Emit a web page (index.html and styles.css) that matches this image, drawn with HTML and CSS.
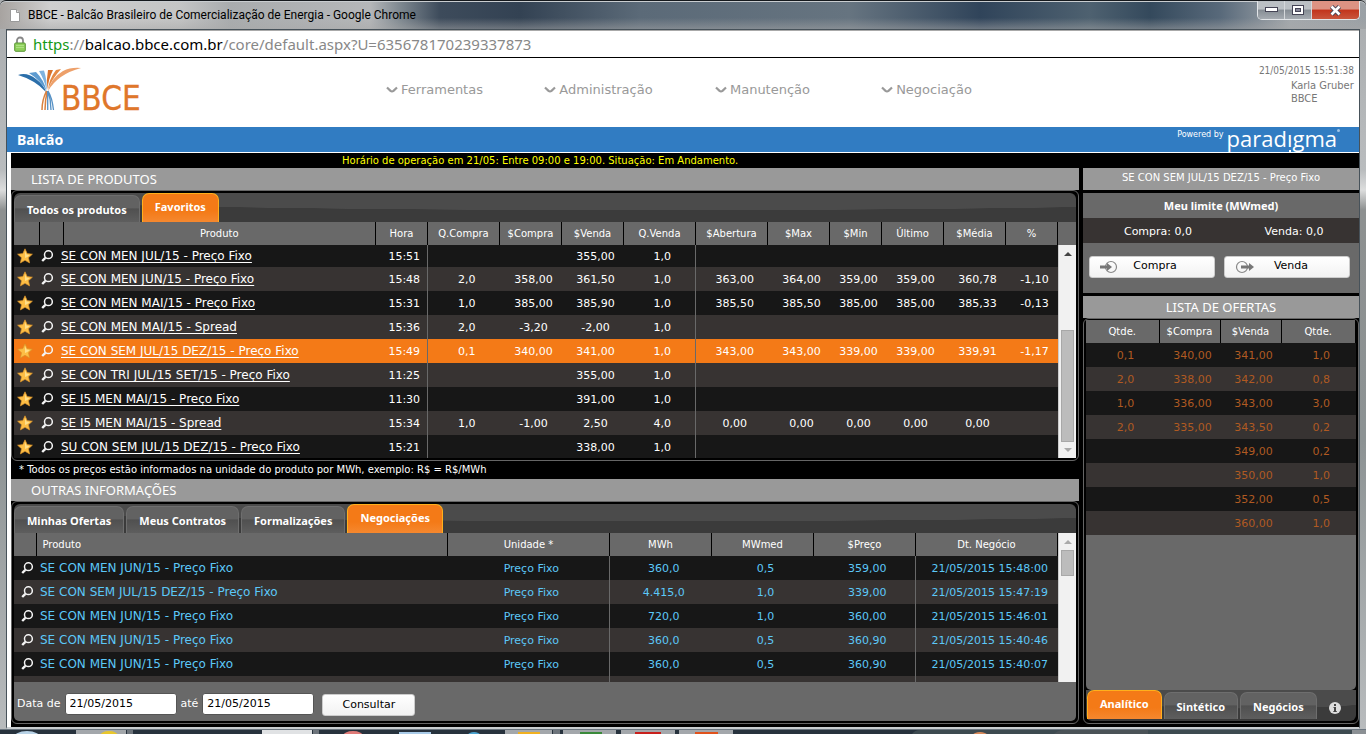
FILE: index.html
```html
<!DOCTYPE html>
<html lang="pt-BR">
<head>
<meta charset="utf-8">
<title>BBCE - Balcão Brasileiro de Comercialização de Energia</title>
<link rel="stylesheet" href="styles.css">
</head>
<body>
<svg class="defs" aria-hidden="true">
  <symbol id="star" viewBox="0 0 16 16"><path d="M8 .8l2.200 4.800 5.200.6-3.900 3.500 1.100 5.200L8 12.300l-4.600 2.600 1.100-5.200L.6 6.200l5.200-.6z" fill="#fdbe45" stroke="#d9902a" stroke-width=".7"/><path d="M8 3l1.500 3.500 3.400.4-2.600 2.200L8 10z" fill="#ffdf8a"/></symbol>
  <symbol id="lens" viewBox="0 0 12 12"><circle cx="7.400" cy="4.700" r="3.900" fill="none" stroke="#f4f4f4" stroke-width="1.500"/><path d="M4.400 7.800L1.200 11" stroke="#f4f4f4" stroke-width="2.400"/></symbol>
  <symbol id="chev" viewBox="0 0 12 8"><path d="M1 1.500L4.500 4.800Q6 5.900 7.500 4.800L11 1.500" fill="none" stroke="#999" stroke-width="2.200"/></symbol>
  <symbol id="up" viewBox="0 0 8 4"><path d="M0 4L4 0l4 4z" fill="currentColor"/></symbol>
  <symbol id="down" viewBox="0 0 8 4"><path d="M0 0l4 4 4-4z" fill="currentColor"/></symbol>
</svg>
<div class="window">
  <div class="titlebar">
    <svg class="page-icon" viewBox="0 0 10 13"><path d="M.5.5h6l3 3v9h-9z" fill="#fff" stroke="#999"/><path d="M6.500.5v3h3" fill="#ddd" stroke="#999"/></svg>
    <span class="caption">BBCE - Balcão Brasileiro de Comercialização de Energia - Google Chrome</span>
    <div class="win-buttons">
      <button class="win-btn" aria-label="Minimizar"><svg width="13" height="6"><rect x=".5" y=".5" width="12" height="4" fill="#fff" stroke="#445"/></svg></button>
      <button class="win-btn" aria-label="Maximizar"><svg width="12" height="10"><rect x=".5" y=".5" width="11" height="9" fill="#fff" stroke="#445"/><rect x="3.500" y="3.500" width="5" height="3" fill="#889" stroke="#445"/></svg></button>
      <button class="win-btn close" aria-label="Fechar"><svg width="13" height="11"><path d="M2.500 1.500l8 8M10.500 1.500l-8 8" stroke="#445" stroke-width="4.500"/><path d="M2.500 1.500l8 8M10.500 1.500l-8 8" stroke="#fff" stroke-width="2.600"/></svg></button>
    </div>
  </div>
  <div class="client">
    <div class="address">
      <svg class="lock" viewBox="0 0 12 16"><path d="M3 8V4.500a3 3 0 016 0V8" fill="none" stroke="#888" stroke-width="1.800"/><rect x=".7" y="7" width="10.600" height="8.300" rx="1" fill="#8fd05c" stroke="#5a9636"/><path d="M2 9.500h8M2 11.500h8" stroke="#b5e58c" stroke-width=".8"/></svg>
      <span><span class="scheme">https</span>://<span class="host">balcao.bbce.com.br</span>/core/default.aspx?U=635678170239337873</span>
    </div>
    <header class="header">
      <svg class="logo" viewBox="0 0 130 50" role="img" aria-label="BBCE">
        <path d="M0 8Q9 5 18 12q8 6 10 13Q17 13 0 8z" fill="#2c6faa"/>
        <path d="M11 6l7-1q8 8 10.500 19Q22 13 11 6z" fill="#5d9bd0"/><path d="M21 4l5-.5q3 9 2.800 20Q26 12 21 4z" fill="#7fb2dd"/>
        <path d="M30 3l5 0Q30 13 29.500 23 28 13 30 3z" fill="#d9722b"/><path d="M38 3l5-1Q33 13 30 23 31 12 38 3z" fill="#e58a45"/>
        <path d="M45 4Q53 0 63 1 40 7 30 24 33 11 45 4z" fill="#eda06a"/>
        <path d="M28.500 24Q24 33 24 43M29.300 24Q27 33 27 43" stroke="#d9813f" stroke-width="1.500" fill="none"/>
        <path d="M29.700 24v19M30 24q3 9 3 19M30 24q4 6 5.500 19" stroke="#5590c4" stroke-width="1.300" fill="none"/>
        <text x="43" y="43" class="logo-text">BBCE</text>
      </svg>
      <nav class="menu">
        <a href="#"><svg><use href="#chev"/></svg>Ferramentas</a>
        <a href="#"><svg><use href="#chev"/></svg>Administração</a>
        <a href="#"><svg><use href="#chev"/></svg>Manutenção</a>
        <a href="#"><svg><use href="#chev"/></svg>Negociação</a>
      </nav>
      <div class="user">
        <div class="clock">21/05/2015 15:51:38</div>
        <div class="who">Karla Gruber<br>BBCE</div>
      </div>
    </header>
    <div class="bluebar">
      <h1>Balcão</h1>
      <div class="powered"><span class="by">Powered by</span><span class="brand">parad<span class="brand-i">ı</span>gma</span><span class="reg"></span></div>
    </div>
    <main class="main">
      <div class="notice">Horário de operação em 21/05: Entre 09:00 e 19:00. Situação: Em Andamento.</div>
      <div class="columns">
        <div class="left">
          <h2 class="section">LISTA DE PRODUTOS</h2>
          <section class="panel">
            <div class="tabs"><button class="tab">Todos os produtos</button><button class="tab active">Favoritos</button></div>
            <div class="grid products">
              <table>
                <colgroup><col class="w26"><col class="w24"><col><col class="w52"><col class="w72"><col class="w62"><col class="w62"><col class="w72"><col class="w72"><col class="w62"><col class="w52"><col class="w62"><col class="w62"><col class="w52"></colgroup>
                <thead><tr><th></th><th></th><th>Produto</th><th>Hora</th><th>Q.Compra</th><th>$Compra</th><th>$Venda</th><th>Q.Venda</th><th>$Abertura</th><th>$Max</th><th>$Min</th><th>Último</th><th>$Média</th><th>%</th></tr></thead>
                <tbody>
                  <tr class="cut"><td><svg class="star"><use href="#star"/></svg></td><td><svg class="lens"><use href="#lens"/></svg></td><td><a href="#">SE CON MEN JUL/15 - Preço Fixo</a></td><td>15:51</td><td></td><td></td><td>355,00</td><td>1,0</td><td></td><td></td><td></td><td></td><td></td><td></td></tr>
                  <tr><td><svg class="star"><use href="#star"/></svg></td><td><svg class="lens"><use href="#lens"/></svg></td><td><a href="#">SE CON MEN JUN/15 - Preço Fixo</a></td><td>15:48</td><td>2,0</td><td>358,00</td><td>361,50</td><td>1,0</td><td>363,00</td><td>364,00</td><td>359,00</td><td>359,00</td><td>360,78</td><td>-1,10</td></tr>
                  <tr><td><svg class="star"><use href="#star"/></svg></td><td><svg class="lens"><use href="#lens"/></svg></td><td><a href="#">SE CON MEN MAI/15 - Preço Fixo</a></td><td>15:31</td><td>1,0</td><td>385,00</td><td>385,90</td><td>1,0</td><td>385,50</td><td>385,50</td><td>385,00</td><td>385,00</td><td>385,33</td><td>-0,13</td></tr>
                  <tr><td><svg class="star"><use href="#star"/></svg></td><td><svg class="lens"><use href="#lens"/></svg></td><td><a href="#">SE CON MEN MAI/15 - Spread</a></td><td>15:36</td><td>2,0</td><td>-3,20</td><td>-2,00</td><td>1,0</td><td></td><td></td><td></td><td></td><td></td><td></td></tr>
                  <tr class="selected"><td><svg class="star"><use href="#star"/></svg></td><td><svg class="lens"><use href="#lens"/></svg></td><td><a href="#">SE CON SEM JUL/15 DEZ/15 - Preço Fixo</a></td><td>15:49</td><td>0,1</td><td>340,00</td><td>341,00</td><td>1,0</td><td>343,00</td><td>343,00</td><td>339,00</td><td>339,00</td><td>339,91</td><td>-1,17</td></tr>
                  <tr><td><svg class="star"><use href="#star"/></svg></td><td><svg class="lens"><use href="#lens"/></svg></td><td><a href="#">SE CON TRI JUL/15 SET/15 - Preço Fixo</a></td><td>11:25</td><td></td><td></td><td>355,00</td><td>1,0</td><td></td><td></td><td></td><td></td><td></td><td></td></tr>
                  <tr><td><svg class="star"><use href="#star"/></svg></td><td><svg class="lens"><use href="#lens"/></svg></td><td><a href="#">SE I5 MEN MAI/15 - Preço Fixo</a></td><td>11:30</td><td></td><td></td><td>391,00</td><td>1,0</td><td></td><td></td><td></td><td></td><td></td><td></td></tr>
                  <tr><td><svg class="star"><use href="#star"/></svg></td><td><svg class="lens"><use href="#lens"/></svg></td><td><a href="#">SE I5 MEN MAI/15 - Spread</a></td><td>15:34</td><td>1,0</td><td>-1,00</td><td>2,50</td><td>4,0</td><td>0,00</td><td>0,00</td><td>0,00</td><td>0,00</td><td>0,00</td><td></td></tr>
                  <tr><td><svg class="star"><use href="#star"/></svg></td><td><svg class="lens"><use href="#lens"/></svg></td><td><a href="#">SU CON SEM JUL/15 DEZ/15 - Preço Fixo</a></td><td>15:21</td><td></td><td></td><td>338,00</td><td>1,0</td><td></td><td></td><td></td><td></td><td></td><td></td></tr>
                </tbody>
              </table>
              <div class="scroll"><svg class="arrow on"><use href="#up"/></svg><span class="track"><span class="thumb low"></span></span><svg class="arrow"><use href="#down"/></svg></div>
            </div>
          </section>
          <p class="note">* Todos os preços estão informados na unidade do produto por MWh, exemplo: R$ = R$/MWh</p>
          <h2 class="section">OUTRAS INFORMAÇÕES</h2>
          <section class="panel grow">
            <div class="tabs"><button class="tab">Minhas Ofertas</button><button class="tab">Meus Contratos</button><button class="tab">Formalizações</button><button class="tab active">Negociações</button></div>
            <div class="grid deals">
              <table>
                <colgroup><col class="w22"><col><col class="w162"><col class="w102"><col class="w102"><col class="w102"><col class="w142"></colgroup>
                <thead><tr><th></th><th class="start">Produto</th><th>Unidade *</th><th>MWh</th><th>MWmed</th><th>$Preço</th><th>Dt. Negócio</th></tr></thead>
                <tbody>
                  <tr><td><svg class="lens"><use href="#lens"/></svg></td><td>SE CON MEN JUN/15 - Preço Fixo</td><td>Preço Fixo</td><td>360,0</td><td>0,5</td><td>359,00</td><td>21/05/2015 15:48:00</td></tr>
                  <tr><td><svg class="lens"><use href="#lens"/></svg></td><td>SE CON SEM JUL/15 DEZ/15 - Preço Fixo</td><td>Preço Fixo</td><td>4.415,0</td><td>1,0</td><td>339,00</td><td>21/05/2015 15:47:19</td></tr>
                  <tr><td><svg class="lens"><use href="#lens"/></svg></td><td>SE CON MEN JUN/15 - Preço Fixo</td><td>Preço Fixo</td><td>720,0</td><td>1,0</td><td>360,00</td><td>21/05/2015 15:46:01</td></tr>
                  <tr><td><svg class="lens"><use href="#lens"/></svg></td><td>SE CON MEN JUN/15 - Preço Fixo</td><td>Preço Fixo</td><td>360,0</td><td>0,5</td><td>360,90</td><td>21/05/2015 15:40:46</td></tr>
                  <tr><td><svg class="lens"><use href="#lens"/></svg></td><td>SE CON MEN JUN/15 - Preço Fixo</td><td>Preço Fixo</td><td>360,0</td><td>0,5</td><td>360,90</td><td>21/05/2015 15:40:07</td></tr>
                  <tr><td><svg class="lens"><use href="#lens"/></svg></td><td></td><td></td><td></td><td></td><td></td><td></td></tr>
                </tbody>
              </table>
              <div class="scroll"><svg class="arrow"><use href="#up"/></svg><span class="track"><span class="thumb high"></span></span><svg class="arrow on"><use href="#down"/></svg></div>
            </div>
            <form class="filter">
              <label for="from">Data de</label><input id="from" type="text" value="21/05/2015">
              <label for="to">até</label><input id="to" type="text" value="21/05/2015">
              <button type="button" class="btn">Consultar</button>
            </form>
          </section>
        </div>
        <aside class="right">
          <h2 class="section pick">SE CON SEM JUL/15 DEZ/15 - Preço Fixo</h2>
          <div class="limit">
            <h3>Meu limite (MWmed)</h3>
            <div class="limit-values"><span>Compra: 0,0</span><span>Venda: 0,0</span></div>
            <div class="actions">
              <button class="btn trade"><svg width="18" height="14"><circle cx="11" cy="7" r="5.500" fill="none" stroke="#888" stroke-width="1.200"/><path d="M0 5.500h7V3l5 4-5 4V8.500H0z" fill="#777"/></svg><span>Compra</span></button>
              <button class="btn trade"><svg width="20" height="14"><circle cx="7" cy="7" r="5.500" fill="none" stroke="#888" stroke-width="1.200"/><path d="M6 5.500h8V3l5 4-5 4V8.500H6z" fill="#777"/></svg><span>Venda</span></button>
            </div>
          </div>
          <h2 class="section center">LISTA DE OFERTAS</h2>
          <section class="panel grow offers">
            <table>
              <colgroup><col class="w73"><col class="w61"><col class="w61"><col></colgroup>
              <thead><tr><th>Qtde.</th><th>$Compra</th><th>$Venda</th><th>Qtde.</th></tr></thead>
              <tbody>
                <tr><td>0,1</td><td>340,00</td><td>341,00</td><td>1,0</td></tr>
                <tr><td>2,0</td><td>338,00</td><td>342,00</td><td>0,8</td></tr>
                <tr><td>1,0</td><td>336,00</td><td>343,00</td><td>3,0</td></tr>
                <tr><td>2,0</td><td>335,00</td><td>343,50</td><td>0,2</td></tr>
                <tr><td></td><td></td><td>349,00</td><td>0,2</td></tr>
                <tr><td></td><td></td><td>350,00</td><td>1,0</td></tr>
                <tr><td></td><td></td><td>352,00</td><td>0,5</td></tr>
                <tr><td></td><td></td><td>360,00</td><td>1,0</td></tr>
              </tbody>
            </table>
            <div class="fill"></div>
            <div class="tabs bottom"><button class="tab active">Analítico</button><button class="tab">Sintético</button><button class="tab">Negócios</button>
              <svg class="info" viewBox="0 0 12 12"><circle cx="6" cy="6" r="6" fill="#ddd"/><path d="M5 2h2v2H5zM4.500 5H7v4h.8v1H4.300V9H5V6h-.5z" fill="#444"/></svg></div>
          </section>
        </aside>
      </div>
    </main>
  </div>
  <svg class="taskbar" viewBox="0 0 1366 5" preserveAspectRatio="xMinYMin slice" aria-hidden="true">
    <rect width="1366" height="5" fill="#27323d"/>
    <path d="M0 .5h1366" stroke="#6b7680"/>
    <ellipse cx="27" cy="10" rx="14" ry="8" fill="#b8d2e6"/>
    <g fill="#a3a7ab"><rect x="76" y="1" width="50" height="4"/><rect x="262" y="1" width="50" height="4" fill="#e0e2e4"/><rect x="505" y="1" width="47" height="4"/><rect x="563" y="1" width="53" height="4"/><rect x="621" y="1" width="54" height="4"/><rect x="679" y="1" width="54" height="4"/></g>
    <g fill="#6d747b"><rect x="127" y="1" width="6" height="4"/><rect x="313" y="1" width="6" height="4"/><rect x="553" y="1" width="7" height="4"/></g>
    <ellipse cx="109" cy="7" rx="9" ry="5" fill="#e8c62c"/><ellipse cx="353" cy="7" rx="10" ry="5" fill="#e07b78"/><rect x="399" y="3" width="32" height="2" fill="#a9cbe8"/><ellipse cx="474" cy="6" rx="6" ry="3" fill="#4ba3cf"/>
    <path d="M518 3h22v2h-22z" fill="#f0b020"/><path d="M580 3h22v2h-22z" fill="#3a8a3a"/><path d="M635 3h26v2h-26z" fill="#c8201c"/><path d="M695 3h23v2h-23z" fill="#e0521c"/>
    <path d="M912 5q3-4 8-4h446v4z" fill="#3d4a50"/><ellipse cx="980" cy="6" rx="7" ry="3" fill="#d98a5a"/><path d="M1054 5q4-4 10-4h84v4z" fill="#4a5257"/><rect x="1352" y="1" width="14" height="4" fill="#8b9094"/>
  </svg>
</div>
</body>
</html>
```
FILE: styles.css
```css
* { box-sizing: border-box; }
body { margin: 0; font-family: "DejaVu Sans", Verdana, sans-serif; font-size: 11px; color: #fff; background: #000; }
button, input { font: inherit; margin: 0; }
h1, h2, h3, p { margin: 0; font-weight: normal; }
.defs { position: absolute; width: 0; height: 0; }

.window { display: flex; flex-direction: column; height: 100vh; overflow: hidden; background: linear-gradient(#a9acae 0, #b9bcbe 170px, #dcdddd 190px, #8d9090 210px, #8c9293 60%, #b9bcbe 100%); }
.titlebar { display: flex; align-items: flex-start; height: 29px; padding: 0 6px 0 10px; border-top: 1px solid #15191d; border-radius: 6px 6px 0 0; box-shadow: inset 0 1px #c9cdd0; background: linear-gradient(#fff0 60%, #a8a8a880), linear-gradient(90deg, #a7a3a0 0, #cfcfcf 50px, #c4c5c5 180px, #a9acae 230px, #b5b7b9 370px, #7e8890 400px, #3d4b5b 440px, #334253 520px, #5b6a78 640px, #667480 850px, #30445a 980px, #4e6170 1090px, #34495c 1150px, #58697a 1220px, #a3a8ac 1290px, #9aa0a5 100%); }
.page-icon { width: 10px; height: 13px; margin-top: 8px; flex: none; }
.caption { flex: 1; margin: 5px 0 0 8px; font: 12px/18px Roboto, "Noto Sans", sans-serif; color: #000; }
.win-buttons { display: flex; height: 19px; border: 1px solid #e2e5e8; border-top: 0; border-radius: 0 0 5px 5px; overflow: hidden; }
.win-btn { display: flex; align-items: center; justify-content: center; width: 27px; padding: 0; border: 0; border-right: 1px solid #d5d8db; background: linear-gradient(#bbc0c4 45%, #868d94 50%, #a5abb1); }
.win-btn.close { width: 47px; border: 0; background: linear-gradient(#dd9383 45%, #c2341c 50%, #c9553c); }

.client { flex: 1; display: flex; flex-direction: column; min-height: 0; margin: 0 6px 0 6px; border: 1px solid #47525a; border-bottom: 2px solid #c9ced1; background: #fff; }
.address { display: flex; align-items: center; gap: 7px; height: 28px; padding: 0 7px; border-top: 1px solid #aaa; border-bottom: 1px solid #000; font: 15px/26px "Noto Sans", sans-serif; color: #888; }
.lock { width: 12px; height: 16px; }
.scheme { color: #159a15; }
.host { color: #000; }

.header { display: grid; grid-template-columns: 1fr 656px 1fr; height: 69px; padding-right: 5px; }
.logo { width: 130px; height: 50px; margin: 9px 0 0 11px; }
.logo-text { font: 33px "DejaVu Sans Condensed", "DejaVu Sans", sans-serif; font-stretch: condensed; fill: #df772b; stroke: #df772b; stroke-width: .3px; }
.menu { display: grid; grid-template-columns: repeat(4, 1fr); align-items: start; padding-top: 22px; }
.menu a { display: flex; align-items: center; justify-content: center; gap: 3px; font-size: 13px; line-height: 20px; color: #999; text-decoration: none; }
.menu svg { width: 12px; height: 8px; }
.user { justify-self: end; padding-top: 6px; font-size: 10px; line-height: 13px; font-family: "DejaVu Sans Condensed", "DejaVu Sans", sans-serif; font-stretch: condensed; color: #777; }
.who { padding: 2px 0 0 32px; font-size: 11px; }

.bluebar { display: flex; justify-content: space-between; align-items: flex-start; height: 26px; padding: 0 19px 0 10px; background: #317cc2; border-bottom: 1px solid #fff; }
.bluebar h1 { font: bold 14px/26px "Noto Sans", sans-serif; }
.powered { display: flex; align-items: flex-start; }
.by { font: 8px/16px "DejaVu Sans", sans-serif; margin-right: 3px; }
.brand { font: 22px/22px "Open Sans", sans-serif; }
.brand-i { position: relative; }
.brand-i::after { content: ""; position: absolute; left: 2px; bottom: 1px; width: 2px; height: 2px; background: #fff; }
.reg { width: 3px; height: 3px; margin-top: 2px; border-radius: 50%; background: #9fc4e6; }

.main { flex: 1; display: flex; flex-direction: column; min-height: 0; margin-left: 4px; padding-bottom: 3px; background: #000; }
.notice { padding: 0 0 0 331px; font-size: 10px; line-height: 15px; color: #ff0; }
.note { padding: 0 8px; font-size: 10px; line-height: 18px; height: 18px; }
.columns { flex: 1; display: grid; grid-template-columns: minmax(0, 1fr) 276px; gap: 4px; min-height: 0; }
.left, .right { display: flex; flex-direction: column; min-height: 0; }
.section { flex: none; padding: 0 20px; font: 13px/22px "Noto Sans", sans-serif; background: #999; }
.center { text-align: center; }
.pick { text-align: center; font: 10px/20px "DejaVu Sans", sans-serif; height: 22px; }

.panel { display: flex; flex-direction: column; padding: 2px; border: 1px solid #666; border-radius: 6px; background: #000; }
.grow { flex: 1; min-height: 0; overflow: hidden; }
.tabs { flex: none; display: flex; align-items: flex-end; gap: 2px; height: 29px; border-radius: 6px 6px 0 0; background: radial-gradient(ellipse 70% 60% at 60% 0, #4b4b4b 98%, #3b3b3b 100%); }
.tab { height: 27px; padding: 2px 12px 0; border: 1px solid #6e6e6e; border-bottom: 0; border-radius: 7px 7px 0 0; color: #fff; font: bold 11px/22px "Noto Sans", sans-serif; background: linear-gradient(#626262 45%, #505050 50%, #5e5e5e); }
.tab.active { height: 29px; padding: 0 12px 3px; border-color: #ffb01c; background: linear-gradient(#f47a17 60%, #f5882f); }

table { width: 100%; border-collapse: collapse; table-layout: fixed; }
th { height: 23px; padding: 0; font-weight: normal; font-size: 10px; background: #696969; border-right: 1px solid #000; }
td { height: 24px; padding: 1px 0 0 6px; text-align: center; font-size: 11px; line-height: 14px; white-space: nowrap; }
tr.cut td { height: 22px; }
tbody tr:nth-child(odd) { background: #171717; }
tbody tr:nth-child(even) { background: #373332; }
tbody tr.selected { background: #f47a17; }
.w22 { width: 22px; } .w24 { width: 24px; } .w26 { width: 25px; } .w52 { width: 52px; }
.w61 { width: 61px; } .w62 { width: 62px; } .w72 { width: 72px; } .w73 { width: 73px; }
.w102 { width: 102px; } .w142 { width: 142px; } .w162 { width: 162px; }

.grid { display: grid; grid-template-columns: minmax(0, 1fr) 18px; background: #696969; overflow: hidden; }
.products { height: 236px; }
.deals { flex: 1; min-height: 0; color: #5cc8f8; }
.deals th { color: #fff; }
.products td:nth-child(1) { padding: 0 4px 0 0; }
.products td:nth-child(2) { padding: 0 8px 0 0; }
.products td:nth-child(3) { padding: 0; text-align: left; font-size: 12px; }
.products td:nth-child(4), .products td:nth-child(8), .deals td:nth-child(3), .deals td:nth-child(6) { border-right: 1px solid #696969; }
.products td a { margin-left: -2px; color: #fff; text-underline-offset: 2px; }
.deals th.start { text-align: left; padding-left: 6px; }
.deals td:nth-child(1) { padding: 0 0 0 4px; }
.deals td:nth-child(2) { padding: 0 0 0 4px; text-align: left; font-size: 12px; }
.star { display: block; width: 16px; height: 16px; margin: 0 auto; }
.lens { display: block; width: 12px; height: 12px; margin: 0 auto; }

.scroll { display: flex; flex-direction: column; align-items: center; padding: 7px 0; color: #aaa; background: #f1f1f1; border-left: 1px solid #ccc; min-height: 0; }
.products .scroll { margin-top: 23px; }
.arrow { flex: none; width: 8px; height: 4px; }
.arrow.on { color: #444; }
.track { flex: 1; display: flex; flex-direction: column; width: 13px; margin: 6px 0; min-height: 0; }
.thumb { border: 1px solid #a8a8a8; background: #bcbcbc; }
.thumb.low { height: 62%; margin-top: auto; }
.thumb.high { height: 26px; }

.filter { display: flex; align-items: center; gap: 4px; height: 39px; padding: 4px 3px 0; border-radius: 0 0 5px 5px; background: #696969; }
.filter input { width: 112px; height: 22px; padding: 0 4px; border: 1px solid #555; border-radius: 3px; background: #fff; color: #000; }
.btn { border: 1px solid #ccc; border-radius: 3px; background: linear-gradient(#fff, #f2f2f2); color: #000; }
.filter .btn { width: 93px; height: 22px; padding: 0; margin: 2px 0 0 4px; }

.limit { flex: none; margin: 3px 0; background: #696969; }
.limit h3 { text-align: center; font: bold 11px/25px "Noto Sans", sans-serif; }
.limit-values { display: grid; grid-template-columns: 1fr 1fr; padding: 2px 0 0 8px; line-height: 23px; text-align: center; background: #373332; }
.limit-values span:last-child { padding-left: 4px; }
.actions { display: flex; gap: 9px; padding: 13px 9px 15px 6px; }
.trade { flex: 1; display: flex; align-items: center; height: 22px; padding: 0 10px; }
.trade span { flex: 1; padding: 0 12px 3px 0; text-align: center; }

.offers { padding: 1px 2px 2px; }
.offers tbody { color: #b05a22; }
.fill { flex: 1; background: #696969; border-radius: 0 0 5px 5px; }
.tabs.bottom { height: 31px; align-items: flex-start; padding-left: 1px; border-radius: 0 0 6px 6px; }
.bottom .tab { margin-top: 2px; }
.bottom .tab.active { margin-top: 0; }
.info { width: 12px; height: 12px; margin: 12px 0 0 10px; }
.taskbar { flex: none; display: block; width: 100%; height: 5px; }
```
